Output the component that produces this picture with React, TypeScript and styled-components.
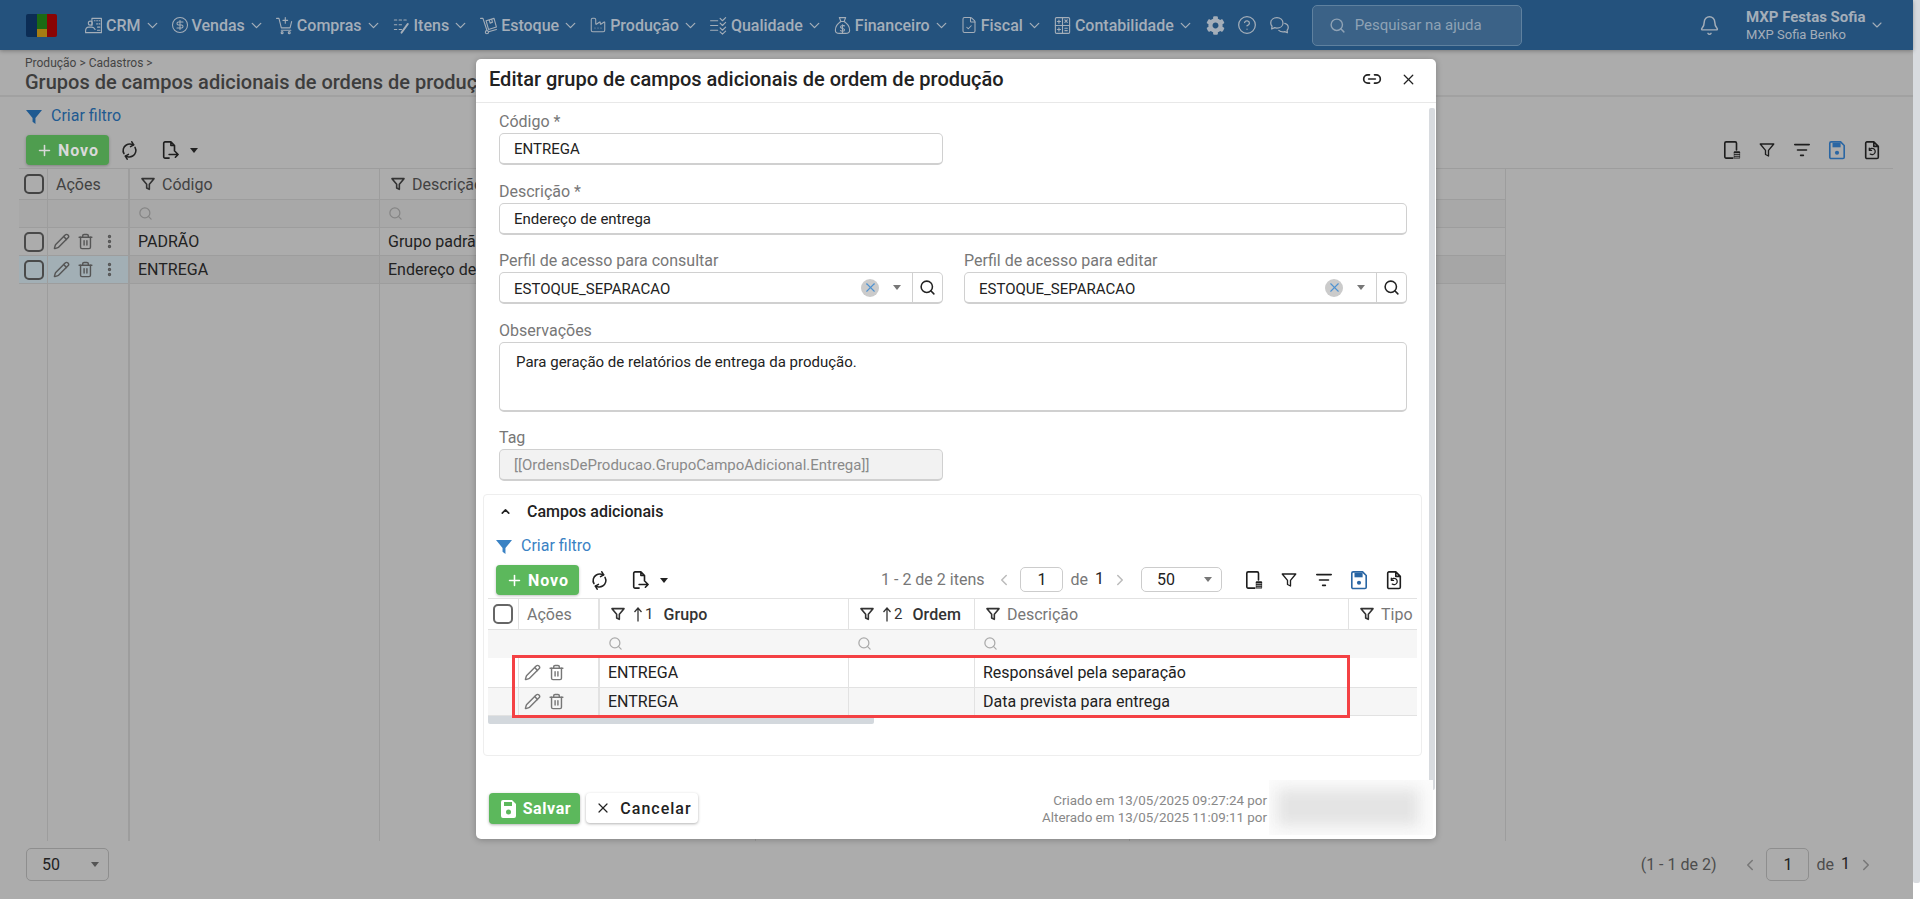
import React from "react";
import styled, { createGlobalStyle } from "styled-components";
import {
  Bell, ChevronDown, ChevronLeft, ChevronRight, ChevronUp, CircleDollarSign, CircleHelp, EllipsisVertical,
  Factory, FileCheck, Link2, Pencil, Plus, RefreshCw, Search, Trash2, X,
} from "lucide-react";
import { FaCog } from "react-icons/fa";

const Global = createGlobalStyle`
  html, body { margin: 0; padding: 0; background: #fff; overflow: hidden; }
  body { font-family: Roboto, "Liberation Sans", sans-serif; font-size: 14px; color: #222; }
  * { box-sizing: border-box; }
`;

const Shell = styled.div`display: flex; width: 1920px; height: 899px; position: relative; overflow: hidden;`;
const PageColumn = styled.div`flex: 1; min-width: 0; display: flex; flex-direction: column; background: #acacac;`;
const PageScroll = styled.div`width: 7px; height: 883px; background: #d8dbdf; border-radius: 0 0 2px 2px;`;

/* top bar */
const TopBar = styled.header`
  height: 50px; flex: none; background: #24527d; display: flex; align-items: center; padding-left: 26px;
  box-shadow: 0 1px 4px rgba(0,0,0,.3); color: #a4aeb9; position: relative;
`;
const Logo = styled.svg`width: 31px; height: 23px; margin-right: 27px; flex: none;`;
const NavItem = styled.div`
  display: flex; align-items: center; margin-right: 10px; font-size: 16px; font-weight: 500; white-space: nowrap;
  span { margin: 0 3px 0 3px; }
`;
const NavSvg = styled.svg`width: 19px; height: 19px; fill: none; stroke: currentColor; stroke-width: 1.4; stroke-linecap: round; stroke-linejoin: round; flex: none;`;
const ToolIcons = styled.div`display: flex; align-items: center; gap: 12px; margin-left: 2px;`;
const HelpSearch = styled.div`
  width: 210px; height: 41px; margin-left: 22px; border: 1px solid #5f819f; border-radius: 5px; background: #3b6287;
  display: flex; align-items: center; gap: 9px; padding-left: 16px; font-size: 15px; color: #8fa2b5;
`;
const UserBlock = styled.div`display: flex; align-items: center; margin-left: auto; padding-right: 28px;`;
const UserText = styled.div`margin: 0 2px 0 26px; display: flex; flex-direction: column;`;
const UserName = styled.div`font-size: 15px; font-weight: 700; line-height: 18px; width: 121px; white-space: nowrap;`;
const UserSub = styled.div`font-size: 13px; line-height: 17px; white-space: nowrap;`;

/* page head */
const PageHead = styled.div`height: 47px; flex: none; padding: 6px 0 0 25px; border-bottom: 2px solid #a1a1a1; color: #3f3f3f;`;
const Crumb = styled.div`font-size: 12px; line-height: 14px; color: #444;`;
const PageTitle = styled.div`font-size: 20px; line-height: 24px; font-weight: 500; color: #3d3d3d; white-space: nowrap;`;

const FilterRow = styled.div<{ $h: number; $left: number }>`
  height: ${p => p.$h}px; flex: none; display: flex; align-items: center; gap: 9px; padding: 0 0 2px ${p => p.$left}px;
  font-size: 16px; color: ${p => (p.$left > 20 ? "#1f5a91" : "#3a82c4")};
  svg { width: 16px; height: 16px; fill: currentColor; margin-top: 4px; }
`;
const Toolbar = styled.div<{ $left: number; $right: number }>`
  height: 33px; flex: none; display: flex; align-items: flex-start; padding: 0 ${p => p.$right}px 0 ${p => p.$left}px; color: #222;
`;
const NewButton = styled.button<{ $dim?: boolean }>`
  width: 83px; height: 30px; border: 0; border-radius: 4px; display: flex; align-items: center; justify-content: center; gap: 5px;
  background: ${p => (p.$dim ? "#4f9d4f" : "#5cb85c")}; color: ${p => (p.$dim ? "#d9d9d9" : "#fff")};
  font: 700 16px Roboto, sans-serif; letter-spacing: 1px; box-shadow: 0 1px 3px rgba(0,0,0,.25); padding: 0;
`;
const ToolGlyphs = styled.div`display: flex; align-items: center; height: 30px; margin-left: 12px; gap: 23px;`;
const ExportWrap = styled.div`display: flex; align-items: center; gap: 11px;`;
const Caret = styled.i<{ $c?: string }>`
  display: block; width: 0; height: 0; border-left: 4px solid transparent; border-right: 4px solid transparent; border-top: 5px solid ${p => p.$c ?? "#222"};
`;
const RightIcons = styled.div`display: flex; align-items: center; height: 30px; gap: 17px; margin-left: auto;`;
const ToolSvg = styled.svg<{ $blue?: boolean }>`
  width: 18px; height: 20px; fill: none; stroke: ${p => (p.$blue ? "#2a66a3" : "#1e1e1e")}; stroke-width: 1.8; stroke-linecap: round; stroke-linejoin: round; flex: none;
`;

/* data grid */
const Grid = styled.div<{ $cols: string; $line: string }>`
  display: grid; grid-template-columns: ${p => p.$cols}; border-top: 1px solid ${p => p.$line}; flex: none; position: relative;
`;
const Cell = styled.div<{ $line: string; $h: number; $bg?: string; $thick?: boolean; $pad?: number; $ink?: string; $noRight?: boolean }>`
  height: ${p => p.$h}px; display: flex; align-items: center; gap: 6px; overflow: hidden; white-space: nowrap;
  padding-left: ${p => p.$pad ?? 8}px;
  background: ${p => p.$bg ?? "transparent"};
  border-bottom: 1px solid ${p => p.$line};
  border-right: ${p => (p.$noRight ? "0" : `${p.$thick ? 2 : 1}px solid ${p.$line}`)};
  font-size: 16px; color: ${p => p.$ink ?? "#222"};
`;
const FillerCell = styled.div<{ $line: string; $thick?: boolean; $h: number; $noRight?: boolean }>`
  height: ${p => p.$h}px;
  border-right: ${p => (p.$noRight ? "0" : `${p.$thick ? 2 : 1}px solid ${p.$line}`)};
`;
const Check = styled.span<{ $c: string }>`display: block; width: 20px; height: 20px; border: 2px solid ${p => p.$c}; border-radius: 5px; flex: none;`;
const SortMark = styled.span`display: inline-flex; align-items: flex-end; font-size: 15px; font-weight: 400; color: #333; gap: 2px; margin: 0 4px 0 1px;`;
const Strong = styled.span`font-weight: 500; color: #333; letter-spacing: .1px;`;
const ActionIcons = styled.div<{ $c: string }>`display: flex; align-items: center; gap: 7px; color: ${p => p.$c}; svg { flex: none; }`;

const MainGridWrap = styled.div`margin: 0 20px 0 19px;`;
const PageFooter = styled.div`margin-top: 7px; padding: 0 38px 0 26px; display: flex; align-items: center; justify-content: space-between; color: #4d4d4d; font-size: 16px;`;
const SelectBox = styled.div<{ $w: number; $h: number; $line: string }>`
  width: ${p => p.$w}px; height: ${p => p.$h}px; border: 1px solid ${p => p.$line}; border-radius: 5px; display: flex; align-items: center; justify-content: space-between;
  padding: 0 9px 0 15px; font-size: 16px; color: #222; flex: none;
`;
const Pager = styled.div`display: flex; align-items: center; gap: 7px; font-size: 16px; white-space: nowrap;`;
const SectionPager = styled(Pager)`margin: 2px 0 0 auto; color: #777;`;
const PagerCount = styled.span<{ $gap: number }>`margin-right: ${p => p.$gap}px;`;
const PageInput = styled.div<{ $line: string; $h: number }>`
  width: 43px; height: ${p => p.$h}px; border: 1px solid ${p => p.$line}; border-radius: 5px; display: flex; align-items: center; justify-content: center; color: #222; font-size: 16px;
`;
const PageOne = styled.span`color: #222; font-size: 16px; margin-bottom: 2px;`;
const SectionSelect = styled(SelectBox)`margin: 0 23px 0 5px;`;
const SectionTools = styled(RightIcons)`margin-left: 0;`;

/* modal */
const Modal = styled.div`
  position: absolute; left: 476px; top: 59px; width: 960px; height: 780px; background: #fff; border-radius: 5px;
  box-shadow: 0 1px 6px rgba(0,0,0,.25); display: flex; flex-direction: column;
`;
const ModalHead = styled.div`
  height: 44px; flex: none; border-bottom: 1px solid #e8e8e8; display: flex; align-items: center; padding: 0 19px 3px 13px; gap: 18px;
`;
const ModalTitle = styled.div`font-size: 20px; font-weight: 500; color: #222; margin-right: auto; white-space: nowrap;`;
const ModalScroll = styled.div`position: absolute; right: 1px; top: 49px; width: 6px; height: 682px; background: #d8dbdf; border-radius: 2px;`;
const ModalBody = styled.div`flex: 1; min-height: 0; padding: 6px 29px 0 23px;`;
const Field = styled.div<{ $mb: number }>`margin-bottom: ${p => p.$mb}px;`;
const FieldLabel = styled.label`display: block; height: 24px; line-height: 26px; font-size: 16px; color: #777;`;
const Half = styled.div`width: 444px;`;
const TwoCols = styled.div`display: grid; grid-template-columns: 444px 443px; column-gap: 21px;`;
const InputBox = styled.div<{ $disabled?: boolean; $h?: number; $top?: boolean }>`
  height: ${p => p.$h ?? 32}px; border: 1px solid #d0d0d0; border-bottom-width: 2px; border-radius: 5px; display: flex; align-items: ${p => (p.$top ? "flex-start" : "center")};
  padding: ${p => (p.$top ? "10px 16px" : "0 14px")}; font-size: 15px;
  background: ${p => (p.$disabled ? "#f2f2f2" : "#fff")}; color: ${p => (p.$disabled ? "#8a8a8a" : "#222")}; white-space: nowrap;
`;
const LookupBox = styled.div`
  height: 32px; border: 1px solid #d0d0d0; border-bottom-width: 2px; border-radius: 5px; display: flex; align-items: center; padding-left: 14px; font-size: 15px; color: #222;
`;
const LookupText = styled.span`flex: 1; padding-top: 2px;`;
const ClearDot = styled.span`
  width: 18px; height: 18px; border-radius: 50%; background: #cbcbcb; color: #4f93d2; display: flex; align-items: center; justify-content: center; margin: 0 14px 0 0;
`;
const LookupBtn = styled.span`
  width: 30px; height: 100%; margin-left: 11px; border-left: 1px solid #d0d0d0; display: flex; align-items: center; justify-content: center; color: #222;
`;
const Section = styled.section`
  margin: 0 -15px 0 -16px; height: 262px; border: 1px solid #eee; border-radius: 4px; padding: 0 4px; position: relative;
`;
const SectionHead = styled.div`height: 32px; display: flex; align-items: center; padding-left: 11px; gap: 15px; font-size: 16px; font-weight: 500; color: #222;`;
const HScroll = styled.div`width: 386px; height: 8px; background: #d3d8dd; border-radius: 0 0 2px 2px;`;
const RedFrame = styled.div`
  position: absolute; left: 28px; top: 160px; width: 838px; height: 63px; border: 3px solid #f44144; pointer-events: none;
`;
const ModalFoot = styled.div`height: 64px; flex: none; display: flex; align-items: flex-start; padding: 18px 6px 0 13px; position: relative;`;
const SaveBtn = styled.button`
  width: 91px; height: 31px; border: 0; border-radius: 4px; background: #5cb85c; color: #fff; font: 700 16px Roboto, sans-serif; letter-spacing: .6px; display: flex; align-items: center; justify-content: center; gap: 7px; box-shadow: 0 1px 3px rgba(0,0,0,.3); padding: 0 0 0 3px;
`;
const CancelBtn = styled.button`
  width: 112px; height: 30px; margin-left: 6px; border: 0; border-radius: 4px; background: #fff; color: #222; font: 500 16px Roboto, sans-serif; letter-spacing: 1px; display: flex; align-items: center; justify-content: center; gap: 9px; box-shadow: 0 1px 3px rgba(0,0,0,.3); padding: 0 0 0 3px;
`;
const Audit = styled.div`margin: -1px 163px 0 auto; text-align: right; font-size: 13.4px; line-height: 17px; color: #888; white-space: nowrap;`;
const Redacted = styled.div`
  position: absolute; right: 3px; top: 5px; width: 164px; height: 55px; background: #fbfbfb; overflow: hidden;
  &::before {
    content: ""; position: absolute; left: 8px; right: 14px; top: 9px; bottom: 9px; background: #e4e4e4; filter: blur(7px);
  }
`;

const funnelPath = "M3 4h18l-7 8.5V20l-4-2v-5.500z";
const FunnelFill = () => <svg viewBox="1 3 22 19"><path d="M1 3h22l-9 11v8l-4-3v-5z" /></svg>;

const ColFunnel = () => (
  <svg width="16" height="16" viewBox="0 0 24 24" fill="none" stroke="#333" strokeWidth="2.4" strokeLinejoin="round" style={{ flex: "none" }}>
    <path d={funnelPath} />
  </svg>
);
const UpArrow = () => (
  <svg width="10" height="17" viewBox="0 0 10 16" fill="none" stroke="#333" strokeWidth="1.3"><path d="M5 15V2M1.500 5.500 5 1.500l3.500 4" /></svg>
);

const CrmIcon = () => <NavSvg viewBox="0 0 24 24"><path d="M10 12V3h12v18H2v-2c0-3 2-5 4-5h4c2 0 3 1 4 3M13 6h1M16 6h1M19 6h1M16 10h1M19 10h1M17 14h3M17 18h3" /><circle cx="8" cy="9" r="2.500" /></NavSvg>;
const CartIcon = () => <NavSvg viewBox="0 0 24 24"><path d="M2 3h3l3 12h11l2-8M8 18h12M13 2v7M10 5.500h6" /><circle cx="9" cy="21" r="1.200" /><circle cx="18" cy="21" r="1.200" /></NavSvg>;
const ItemsIcon = () => <NavSvg viewBox="0 0 24 24" strokeWidth={3} strokeLinecap="butt"><path d="M3 5h3M9 5h3M15 5h3M3 11h3M9 11h3M3 17h3M9 17h3" /><path d="M20 10l-8 11" strokeWidth={2.4} /></NavSvg>;
const StockIcon = () => <NavSvg viewBox="0 0 24 24"><path d="M2 3h3l5 15" /><circle cx="10" cy="20.500" r="2" /><path d="M9 6l10-3 3 11-10 3zM13 5l1 4 3-1-1-4M12 20l10-3" /></NavSvg>;
const QualityIcon = () => <NavSvg viewBox="0 0 24 24"><path d="M2 6h9M2 12h9M2 18h9M14 3l3 3 4-4M14 9l3 3 4-4M14 15l3 3 4-4M14 20l3 3 4-4" /></NavSvg>;
const MoneyIcon = () => <NavSvg viewBox="0 0 24 24"><path d="M8 2h8l-2 5h-4zM10 7c-5 3-7 8-7 11 0 3 2 4 5 4h8c3 0 5-1 5-4 0-3-2-8-7-11M9 7h6M14.500 12.500c-1-1-5-1-5 1.500s5 1 5 3.500-4 2-5 1M12 11v10" /></NavSvg>;
const CalcIcon = () => <NavSvg viewBox="0 0 24 24"><rect x="3" y="2" width="18" height="20" rx="1.500" /><path d="M3 12h18M12 2v20M5.500 7h4M7.500 5v4M15 5l3 3M18 5l-3 3M5.500 17h4M7.500 15v4M15 15.500h3M15 18.500h3" /></NavSvg>;
const ChatIcon = () => <NavSvg viewBox="0 0 24 24" style={{ width: 21, height: 21 }}><path d="M9 3C5 3 2 5.500 2 9c0 1.500.5 2.800 1.500 3.800L3 16l3.500-1.500c.8.300 1.600.400 2.500.400 4 0 7-2.500 7-5.900S13 3 9 3zM18 9.500c2.500.8 4 2.500 4 4.700 0 1.200-.5 2.300-1.300 3.100l.3 3-3-1.300c-.7.200-1.300.300-2 .300-2 0-3.700-.7-4.800-1.800" /></NavSvg>;

const Nav = ({ icon, label }: { icon: React.ReactNode; label: string }) => (
  <NavItem>{icon}<span>{label}</span><ChevronDown size={17} strokeWidth={1.8} /></NavItem>
);

const DeviceIcon = () => <ToolSvg viewBox="0 0 20 22"><path d="M11 20H3.500A1.500 1.500 0 0 1 2 18.500V3.500A1.500 1.500 0 0 1 3.500 2h10A1.500 1.500 0 0 1 15 3.500V11" /><rect x="12" y="12.500" width="7" height="8" rx="1" fill="#1e1e1e" stroke="none" /><path d="M13 15h5M13 17h5M13 19h5" stroke="#acacac" strokeWidth="1" /></ToolSvg>;
const FunnelIcon = () => <ToolSvg viewBox="0 0 24 24" strokeWidth={2.6}><path d={funnelPath} /></ToolSvg>;
const LinesIcon = () => <ToolSvg viewBox="0 0 20 20" strokeWidth={2}><path d="M2 4h16M5 10h10M8.500 16h3" /></ToolSvg>;
const SaveIcon = () => <ToolSvg $blue viewBox="0 0 20 22"><path d="M4 2h10l4 4v13a1.500 1.500 0 0 1-1.500 1.500h-13A1.500 1.500 0 0 1 2 19V3.500A1.500 1.500 0 0 1 3.500 2z" /><rect x="5" y="3" width="9" height="5" fill="#2a66a3" stroke="none" /><circle cx="10" cy="14" r="2.300" fill="#2a66a3" stroke="none" /></ToolSvg>;
const FileUndoIcon = () => <ToolSvg viewBox="0 0 20 22"><path d="M4 2h8l5 5v12a1.500 1.500 0 0 1-1.500 1.500h-11A1.500 1.500 0 0 1 3 19V3.500A1.500 1.500 0 0 1 4 2zM12 2v5h5" /><path d="M7 11a3.500 3.500 0 1 1 1 4.500M7 9v2.500h2.500" strokeWidth="1.400" /></ToolSvg>;
const ExportIcon = () => <ToolSvg viewBox="0 0 20 22"><path d="M9 20H4.500A1.500 1.500 0 0 1 3 18.500V3.500A1.500 1.500 0 0 1 4.500 2H11l4 4v6M11 2v4h4M9 16h10M16 13l3 3-3 3" /></ToolSvg>;
const SyncIcon = () => <RefreshCw size={17} strokeWidth={2.2} style={{ transform: "rotate(-30deg)" }} />;
const FloppyIcon = () => (
  <svg width="15" height="18" viewBox="0 0 15 18" fill="#fff"><path d="M2 0h9l4 4v12a2 2 0 0 1-2 2H2a2 2 0 0 1-2-2V2a2 2 0 0 1 2-2zM3 2v4h8V2zM7.500 9.500a2.500 2.500 0 1 0 0 5 2.500 2.500 0 0 0 0-5z" fillRule="evenodd" /></svg>
);

const ToolSet = () => (<><DeviceIcon /><FunnelIcon /><LinesIcon /><SaveIcon /><FileUndoIcon /></>);
const ToolGroup = () => (
  <ToolGlyphs><SyncIcon /><ExportWrap><ExportIcon /><Caret /></ExportWrap></ToolGlyphs>
);
const Actions = ({ c, dots }: { c: string; dots?: boolean }) => (
  <ActionIcons $c={c}>
    <Pencil size={17} strokeWidth={2} />
    <Trash2 size={17} strokeWidth={2} />
    {dots && <EllipsisVertical size={17} strokeWidth={2.8} />}
  </ActionIcons>
);

const mainLine = "#9d9d9d";
const mainRows: [string, string, boolean][] = [["PADRÃO", "Grupo padrão", false], ["ENTREGA", "Endereço de entrega", true]];
const dimInk = "#424242";
const mainFilterBg = "#a8a8a8";
const mainTint = "#a2afb5";
const mainSelBg = "#a6a6a6";

const MainGrid = () => {
  const L = mainLine;
  const restFill = (h: number, bg?: string) => (
    <>
      <Cell $line={L} $h={h} $bg={bg} />
      <Cell $line={L} $h={h} $bg={bg} />
    </>
  );
  return (
    <MainGridWrap>
      <Grid $line={L} $cols="29px 82px 250px 376px 374px 376px 387px">
        <Cell $line={L} $h={31} $pad={5}><Check $c="#444" /></Cell>
        <Cell $line={L} $h={31} $thick $pad={8} $ink={dimInk}>Ações</Cell>
        <Cell $line={L} $h={31} $pad={10} $ink={dimInk}><ColFunnel />Código</Cell>
        <Cell $line={L} $h={31} $pad={10} $ink={dimInk}><ColFunnel />Descrição</Cell>
        {restFill(31)}<FillerCell $line={L} $h={31} $noRight />

        <Cell $line={L} $h={28} $bg={mainFilterBg} /><Cell $line={L} $h={28} $bg={mainFilterBg} $thick />
        <Cell $line={L} $h={28} $bg={mainFilterBg} $pad={8}><Search size={15} color="#858585" /></Cell>
        <Cell $line={L} $h={28} $bg={mainFilterBg} $pad={8}><Search size={15} color="#858585" /></Cell>
        {restFill(28, mainFilterBg)}<FillerCell $line={L} $h={28} $noRight />

        {mainRows.map(([code, desc, sel]) => (
          <React.Fragment key={code}>
            <Cell $line={L} $h={28} $pad={5} $bg={sel ? mainTint : undefined}><Check $c="#4a4a4a" /></Cell>
            <Cell $line={L} $h={28} $thick $pad={5} $ink="#555" $bg={sel ? mainTint : undefined}><Actions c="#555" dots /></Cell>
            <Cell $line={L} $h={28} $bg={sel ? mainSelBg : undefined}>{code}</Cell>
            <Cell $line={L} $h={28} $bg={sel ? mainSelBg : undefined}>{desc}</Cell>
            {restFill(28, sel ? mainSelBg : undefined)}<FillerCell $line={L} $h={28} $noRight />
          </React.Fragment>
        ))}
        <FillerCell $line={L} $h={557} /><FillerCell $line={L} $h={557} $thick /><FillerCell $line={L} $h={557} />
        <FillerCell $line={L} $h={557} /><FillerCell $line={L} $h={557} /><FillerCell $line={L} $h={557} /><FillerCell $line={L} $h={557} $noRight />
      </Grid>
    </MainGridWrap>
  );
};

const subLine = "#e2e2e2";
const subMuted = "#777";
const SubGrid = () => {
  const L = subLine;
  const rows: [string, string, string | undefined][] = [["ENTREGA", "Responsável pela separação", undefined], ["ENTREGA", "Data prevista para entrega", "#f6f6f6"]];
  return (
    <Grid $line={L} $cols="31px 81px 249px 126px 374px 68px">
      <Cell $line={L} $h={31} $pad={5}><Check $c="#666" /></Cell>
      <Cell $line={L} $h={31} $thick $pad={8} $ink={subMuted}>Ações</Cell>
      <Cell $line={L} $h={31} $pad={10}><ColFunnel /><SortMark><UpArrow />1</SortMark><Strong>Grupo</Strong></Cell>
      <Cell $line={L} $h={31} $pad={10}><ColFunnel /><SortMark><UpArrow />2</SortMark><Strong>Ordem</Strong></Cell>
      <Cell $line={L} $h={31} $pad={10} $ink={subMuted}><ColFunnel />Descrição</Cell>
      <Cell $line={L} $h={31} $pad={10} $noRight $ink={subMuted}><ColFunnel />Tipo</Cell>

      <Cell $line="#f6f6f6" $h={28} $bg="#f6f6f6" /><Cell $line="#f6f6f6" $h={28} $bg="#f6f6f6" $thick />
      <Cell $line="#f6f6f6" $h={28} $bg="#f6f6f6" $pad={8}><Search size={15} color="#aaa" /></Cell>
      <Cell $line="#f6f6f6" $h={28} $bg="#f6f6f6" $pad={8}><Search size={15} color="#aaa" /></Cell>
      <Cell $line="#f6f6f6" $h={28} $bg="#f6f6f6" $pad={8}><Search size={15} color="#aaa" /></Cell>
      <Cell $line="#f6f6f6" $h={28} $bg="#f6f6f6" $noRight />

      {rows.map(([g, d, bg], i) => (
        <React.Fragment key={d}>
          <Cell $line={L} $h={i ? 28 : 30} $bg={bg} />
          <Cell $line={L} $h={i ? 28 : 30} $bg={bg} $thick $pad={5}><Actions c="#777" /></Cell>
          <Cell $line={L} $h={i ? 28 : 30} $bg={bg}>{g}</Cell>
          <Cell $line={L} $h={i ? 28 : 30} $bg={bg} />
          <Cell $line={L} $h={i ? 28 : 30} $bg={bg}>{d}</Cell>
          <Cell $line={L} $h={i ? 28 : 30} $bg={bg} $noRight />
        </React.Fragment>
      ))}
    </Grid>
  );
};

const Lookup = () => (
  <LookupBox>
    <LookupText>ESTOQUE_SEPARACAO</LookupText>
    <ClearDot><X size={15} strokeWidth={1.8} /></ClearDot>
    <Caret $c="#777" />
    <LookupBtn><Search size={17} strokeWidth={2.2} /></LookupBtn>
  </LookupBox>
);

export default function App() {
  return (
    <Shell>
      <Global />
      <PageColumn>
        <TopBar>
          <Logo viewBox="0 0 31 23">
            <path d="M2 0h9v23H2a2 2 0 0 1-2-2V2a2 2 0 0 1 2-2z" fill="#0c2d55" />
            <rect x="11" width="10" height="15" fill="#1c6a14" />
            <rect x="11" y="15" width="10" height="8" fill="#a67c12" />
            <path d="M21 0h8a2 2 0 0 1 2 2v19a2 2 0 0 1-2 2h-8z" fill="#8a0404" />
          </Logo>
          <Nav icon={<CrmIcon />} label="CRM" />
          <Nav icon={<CircleDollarSign size={18} strokeWidth={1.4} />} label="Vendas" />
          <Nav icon={<CartIcon />} label="Compras" />
          <Nav icon={<ItemsIcon />} label="Itens" />
          <Nav icon={<StockIcon />} label="Estoque" />
          <Nav icon={<Factory size={18} strokeWidth={1.4} />} label="Produção" />
          <Nav icon={<QualityIcon />} label="Qualidade" />
          <Nav icon={<MoneyIcon />} label="Financeiro" />
          <Nav icon={<FileCheck size={18} strokeWidth={1.4} />} label="Fiscal" />
          <Nav icon={<CalcIcon />} label="Contabilidade" />
          <ToolIcons>
            <FaCog size={19} />
            <CircleHelp size={20} strokeWidth={1.5} />
            <ChatIcon />
          </ToolIcons>
          <HelpSearch><Search size={17} />Pesquisar na ajuda</HelpSearch>
          <UserBlock>
            <Bell size={21} strokeWidth={1.7} />
            <UserText><UserName>MXP Festas Sofia</UserName><UserSub>MXP Sofia Benko</UserSub></UserText>
            <ChevronDown size={16} strokeWidth={1.6} />
          </UserBlock>
        </TopBar>

        <PageHead>
          <Crumb>Produção &gt; Cadastros &gt;</Crumb>
          <PageTitle>Grupos de campos adicionais de ordens de produção</PageTitle>
        </PageHead>
        <FilterRow $h={38} $left={26}><FunnelFill />Criar filtro</FilterRow>
        <Toolbar $left={26} $right={32}>
          <NewButton $dim><Plus size={17} strokeWidth={2.2} />Novo</NewButton>
          <ToolGroup />
          <RightIcons><ToolSet /></RightIcons>
        </Toolbar>
        <MainGrid />
        <PageFooter>
          <SelectBox $w={83} $h={33} $line="#8e8e8e">50<Caret $c="#555" /></SelectBox>
          <Pager>
            <PagerCount $gap={18}>(1 - 1 de 2)</PagerCount>
            <ChevronLeft size={18} color="#777" />
            <PageInput $line="#8e8e8e" $h={33}>1</PageInput>
            <span>de</span><PageOne>1</PageOne>
            <ChevronRight size={18} color="#777" />
          </Pager>
        </PageFooter>
      </PageColumn>
      <PageScroll />

      <Modal>
        <ModalHead>
          <ModalTitle>Editar grupo de campos adicionais de ordem de produção</ModalTitle>
          <Link2 size={20} strokeWidth={2} color="#222" />
          <X size={17} strokeWidth={1.8} color="#222" />
        </ModalHead>
        <ModalScroll />
        <ModalBody>
          <Field $mb={14}><Half><FieldLabel>Código *</FieldLabel><InputBox>ENTREGA</InputBox></Half></Field>
          <Field $mb={13}><FieldLabel>Descrição *</FieldLabel><InputBox>Endereço de entrega</InputBox></Field>
          <Field $mb={14}>
            <TwoCols>
              <div><FieldLabel>Perfil de acesso para consultar</FieldLabel><Lookup /></div>
              <div><FieldLabel>Perfil de acesso para editar</FieldLabel><Lookup /></div>
            </TwoCols>
          </Field>
          <Field $mb={13}><FieldLabel>Observações</FieldLabel><InputBox $h={70} $top>Para geração de relatórios de entrega da produção.</InputBox></Field>
          <Field $mb={13}><Half><FieldLabel>Tag</FieldLabel><InputBox $disabled>[[OrdensDeProducao.GrupoCampoAdicional.Entrega]]</InputBox></Half></Field>
          <Section>
            <SectionHead><ChevronUp size={13} strokeWidth={3} />Campos adicionais</SectionHead>
            <FilterRow $h={38} $left={8}><FunnelFill />Criar filtro</FilterRow>
            <Toolbar $left={8} $right={14}>
              <NewButton><Plus size={17} strokeWidth={2.2} />Novo</NewButton>
              <ToolGroup />
              <SectionPager>
                <PagerCount $gap={4}>1 - 2 de 2 itens</PagerCount>
                <ChevronLeft size={18} color="#bbb" />
                <PageInput $line="#ccc" $h={25}>1</PageInput>
                <span>de</span><PageOne>1</PageOne>
                <ChevronRight size={18} color="#bbb" />
                <SectionSelect $w={81} $h={25} $line="#ccc">50<Caret $c="#777" /></SectionSelect>
              </SectionPager>
              <SectionTools><ToolSet /></SectionTools>
            </Toolbar>
            <SubGrid />
            <HScroll />
            <RedFrame />
          </Section>
        </ModalBody>
        <ModalFoot>
          <SaveBtn><FloppyIcon />Salvar</SaveBtn>
          <CancelBtn><X size={16} strokeWidth={1.8} />Cancelar</CancelBtn>
          <Audit>Criado em 13/05/2025 09:27:24 por<br />Alterado em 13/05/2025 11:09:11 por</Audit>
          <Redacted />
        </ModalFoot>
      </Modal>
    </Shell>
  );
}
